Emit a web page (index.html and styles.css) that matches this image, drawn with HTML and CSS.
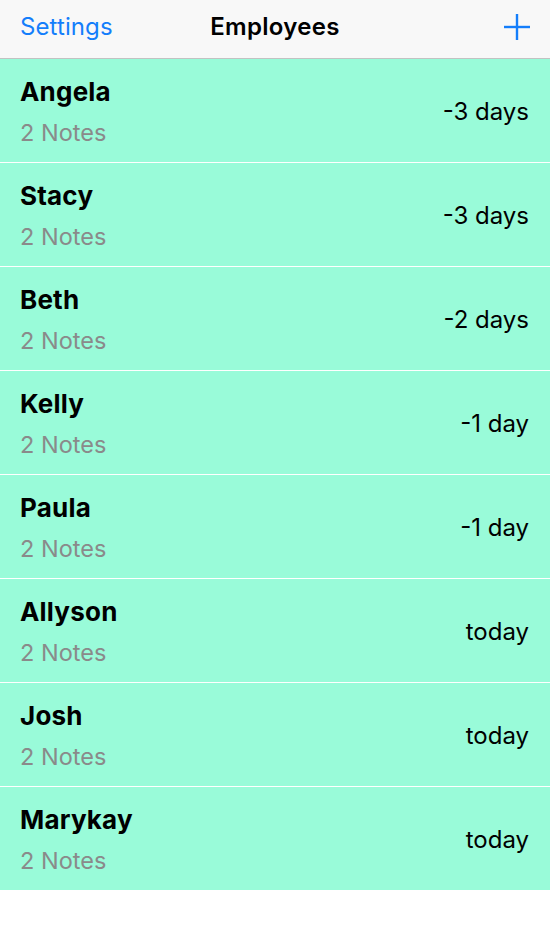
FILE: index.html
```html
<!DOCTYPE html>
<html lang="en">
<head>
    <meta charset="UTF-8">
    <meta name="viewport" content="width=device-width, initial-scale=1.0">
    <title>Employees</title>
    <link rel="stylesheet" href="styles.css">
</head>
<body>
    <!-- nav bar -->
    <header class="navbar">
        <a class="nav-left" href="#">Settings</a>
        <h1 class="nav-title">Employees</h1>
        <a class="nav-right" href="#" aria-label="Add">
            <svg width="28" height="28" viewBox="0 0 28 28">
                <line x1="14" y1="1" x2="14" y2="27" stroke="#147efb" stroke-width="2.4"/>
                <line x1="1" y1="14" x2="27" y2="14" stroke="#147efb" stroke-width="2.4"/>
            </svg>
        </a>
    </header>

    <ul class="list">
        <li class="row">
            <div class="info"><div class="name">Angela</div><div class="notes">2 Notes</div></div>
            <div class="detail">-3 days</div>
        </li>
        <li class="row">
            <div class="info"><div class="name">Stacy</div><div class="notes">2 Notes</div></div>
            <div class="detail">-3 days</div>
        </li>
        <li class="row">
            <div class="info"><div class="name">Beth</div><div class="notes">2 Notes</div></div>
            <div class="detail">-2 days</div>
        </li>
        <li class="row">
            <div class="info"><div class="name">Kelly</div><div class="notes">2 Notes</div></div>
            <div class="detail">-1 day</div>
        </li>
        <li class="row">
            <div class="info"><div class="name">Paula</div><div class="notes">2 Notes</div></div>
            <div class="detail">-1 day</div>
        </li>
        <li class="row">
            <div class="info"><div class="name">Allyson</div><div class="notes">2 Notes</div></div>
            <div class="detail">today</div>
        </li>
        <li class="row">
            <div class="info"><div class="name">Josh</div><div class="notes">2 Notes</div></div>
            <div class="detail">today</div>
        </li>
        <li class="row">
            <div class="info"><div class="name">Marykay</div><div class="notes">2 Notes</div></div>
            <div class="detail">today</div>
        </li>
    </ul>
</body>
</html>
```
FILE: styles.css
```css
body {
    margin: 0;
    padding: 0;
    font-family: Inter, "Liberation Sans", sans-serif;
    background-color: #fff;
    color: #000;
}
.navbar {
    box-sizing: border-box;
    display: grid;
    grid-template-columns: 1fr auto 1fr;
    align-items: center;
    height: 59px;
    padding: 0 20px 6px;
    background-color: #f8f8f8;
    border-bottom: 1px solid #c2c2c2;
}
.nav-left {
    justify-self: start;
    color: #147efb;
    font-size: 24px;
    letter-spacing: 0.1px;
    text-decoration: none;
}
.nav-title {
    margin: 0;
    font-size: 24px;
    font-weight: 600;
    letter-spacing: 0.3px;
}
.nav-right {
    justify-self: end;
    display: flex;
    margin-right: -1px;
    margin-top: 2px;
}
.list {
    list-style: none;
    margin: 0;
    padding: 0;
    display: flex;
    flex-direction: column;
    gap: 1.5px;
}
.row {
    height: 102.5px;
    display: flex;
    align-items: center;
    justify-content: space-between;
    padding: 0 21px 0 20px;
    background-color: #99fbd9;
}
.info {
    padding-top: 4px;
}
.name {
    font-size: 26px;
    font-weight: 700;
    letter-spacing: 0.2px;
    line-height: 30px;
}
.notes {
    margin-top: 11px;
    font-size: 23.5px;
    line-height: 30px;
    color: #8a8a8a;
}
.detail {
    padding-top: 2px;
    font-size: 24px;
}
```
